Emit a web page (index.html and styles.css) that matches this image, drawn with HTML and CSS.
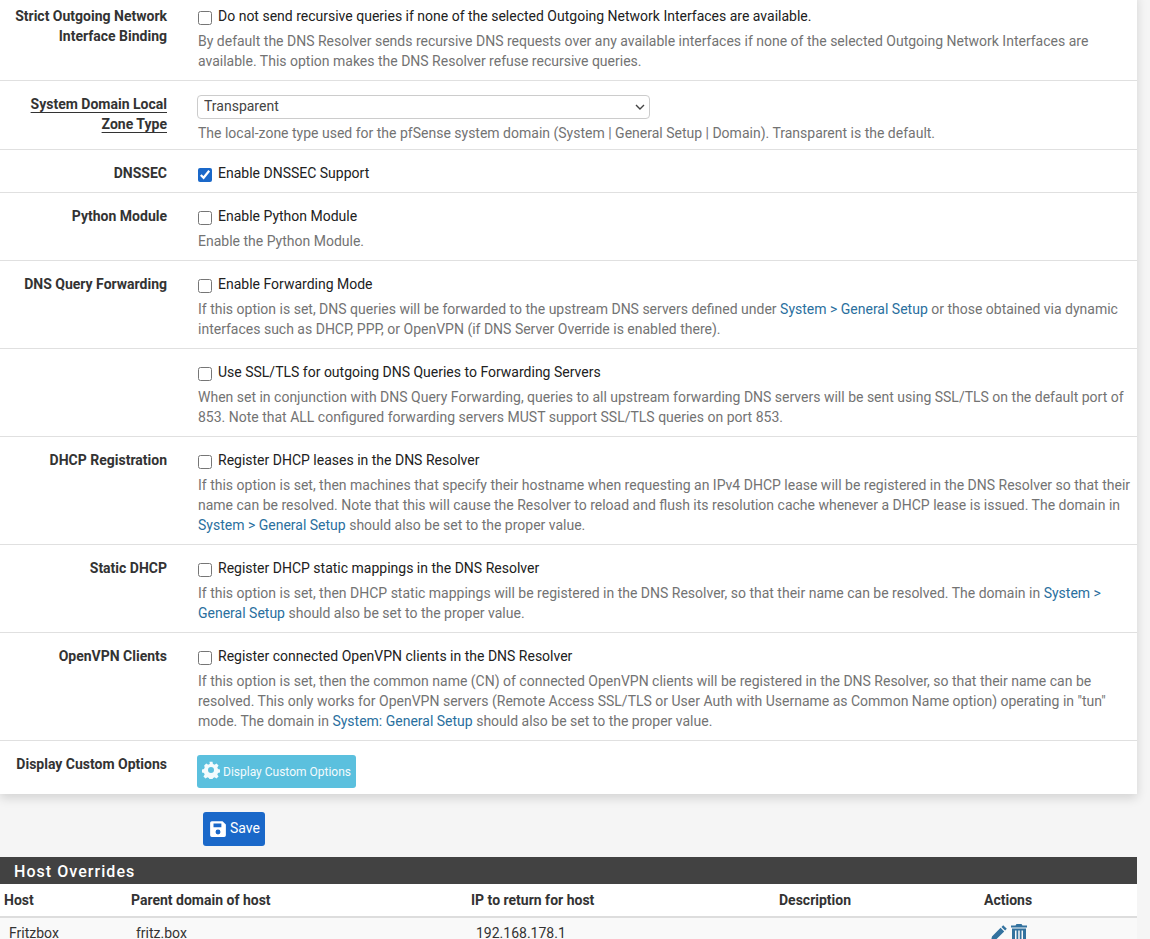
FILE: index.html
```html
<!DOCTYPE html>
<html lang="en">
<head>
<meta charset="utf-8">
<title>DNS Resolver</title>
<link rel="stylesheet" href="styles.css">
</head>
<body>
<main class="page">
<section class="panel">
  <div class="row">
    <div class="label">Strict Outgoing Network Interface Binding</div>
    <div class="field">
      <label class="check"><input type="checkbox">Do not send recursive queries if none of the selected Outgoing Network Interfaces are available.</label>
      <p class="help">By default the DNS Resolver sends recursive DNS requests over any available interfaces if none of the selected Outgoing Network Interfaces are available. This option makes the DNS Resolver refuse recursive queries.</p>
    </div>
  </div>
  <div class="row row-select">
    <div class="label"><span class="underlined">System Domain Local Zone Type</span></div>
    <div class="field">
      <div class="select-wrap">
        <select class="select"><option>Transparent</option></select>
        <svg class="select-arrow" viewBox="0 0 10 6" aria-hidden="true"><path fill="none" stroke="currentColor" stroke-width="1.400" d="M1 1l4 4 4-4"/></svg>
      </div>
      <p class="help help-select">The local-zone type used for the pfSense system domain (System | General Setup | Domain). Transparent is the default.</p>
    </div>
  </div>
  <div class="row">
    <div class="label">DNSSEC</div>
    <div class="field"><label class="check"><input type="checkbox" checked>Enable DNSSEC Support</label></div>
  </div>
  <div class="row">
    <div class="label">Python Module</div>
    <div class="field">
      <label class="check"><input type="checkbox">Enable Python Module</label>
      <p class="help">Enable the Python Module.</p>
    </div>
  </div>
  <div class="row">
    <div class="label">DNS Query Forwarding</div>
    <div class="field">
      <label class="check"><input type="checkbox">Enable Forwarding Mode</label>
      <p class="help">If this option is set, DNS queries will be forwarded to the upstream DNS servers defined under <a href="#">System &gt; General Setup</a> or those obtained via dynamic interfaces such as DHCP, PPP, or OpenVPN (if DNS Server Override is enabled there).</p>
    </div>
  </div>
  <div class="row">
    <div class="label"></div>
    <div class="field">
      <label class="check"><input type="checkbox">Use SSL/TLS for outgoing DNS Queries to Forwarding Servers</label>
      <p class="help">When set in conjunction with DNS Query Forwarding, queries to all upstream forwarding DNS servers will be sent using SSL/TLS on the default port of 853. Note that ALL configured forwarding servers MUST support SSL/TLS queries on port 853.</p>
    </div>
  </div>
  <div class="row">
    <div class="label">DHCP Registration</div>
    <div class="field">
      <label class="check"><input type="checkbox">Register DHCP leases in the DNS Resolver</label>
      <p class="help">If this option is set, then machines that specify their hostname when requesting an IPv4 DHCP lease will be registered in the DNS Resolver so that their name can be resolved. Note that this will cause the Resolver to reload and flush its resolution cache whenever a DHCP lease is issued. The domain in <a href="#">System &gt; General Setup</a> should also be set to the proper value.</p>
    </div>
  </div>
  <div class="row">
    <div class="label">Static DHCP</div>
    <div class="field">
      <label class="check"><input type="checkbox">Register DHCP static mappings in the DNS Resolver</label>
      <p class="help">If this option is set, then DHCP static mappings will be registered in the DNS Resolver, so that their name can be resolved. The domain in <a href="#">System &gt; General Setup</a> should also be set to the proper value.</p>
    </div>
  </div>
  <div class="row">
    <div class="label">OpenVPN Clients</div>
    <div class="field">
      <label class="check"><input type="checkbox">Register connected OpenVPN clients in the DNS Resolver</label>
      <p class="help">If this option is set, then the common name (CN) of connected OpenVPN clients will be registered in the DNS Resolver, so that their name can be resolved. This only works for OpenVPN servers (Remote Access SSL/TLS or User Auth with Username as Common Name option) operating in "tun" mode. The domain in <a href="#">System: General Setup</a> should also be set to the proper value.</p>
    </div>
  </div>
  <div class="row row-last">
    <div class="label">Display Custom Options</div>
    <div class="field">
      <button class="btn btn-info" type="button">
        <svg class="icon-gear" viewBox="0 0 24 24" aria-hidden="true"><path fill="currentColor" fill-rule="evenodd" d="M10 1h4l.6 3a8.400 8.400 0 0 1 2.100.9l2.600-1.700 2.800 2.800-1.700 2.600c.4.700.7 1.400.9 2.100l3 .6v4l-3 .6a8.400 8.400 0 0 1-.9 2.100l1.700 2.600-2.800 2.800-2.600-1.700a8.400 8.400 0 0 1-2.100.9l-.6 3h-4l-.6-3a8.400 8.400 0 0 1-2.100-.9l-2.600 1.700-2.800-2.800 1.700-2.600a8.400 8.400 0 0 1-.9-2.100l-3-.6v-4l3-.6c.2-.7.5-1.400.9-2.100L2.900 6l2.800-2.800 2.600 1.700c.7-.4 1.400-.7 2.100-.9zM12 8a4 4 0 1 0 0 8 4 4 0 0 0 0-8z"/></svg>
        <span>Display Custom Options</span>
      </button>
    </div>
  </div>
</section>

<div class="actions">
  <button class="btn btn-save" type="button">
    <svg class="icon-save" viewBox="0 0 16 16" aria-hidden="true"><path fill="currentColor" fill-rule="evenodd" d="M2 1h10l3 3v9.500A1.500 1.500 0 0 1 13.500 15h-11A1.500 1.500 0 0 1 1 13.500v-11A1.500 1.500 0 0 1 2.500 1zM4 3v3.500h7V3zm4 5.500a2.200 2.200 0 1 0 0 4.400 2.200 2.200 0 0 0 0-4.400z"/></svg>
    <span class="save-text">Save</span>
  </button>
</div>

<section class="hosts">
  <h2 class="hosts-title">Host Overrides</h2>
  <table class="hosts-table">
    <thead>
      <tr>
        <th class="c-host">Host</th>
        <th class="c-parent">Parent domain of host</th>
        <th class="c-ip">IP to return for host</th>
        <th class="c-desc">Description</th>
        <th class="c-actions">Actions</th>
      </tr>
    </thead>
    <tbody>
      <tr>
        <td>Fritzbox</td>
        <td>fritz.box</td>
        <td>192.168.178.1</td>
        <td></td>
        <td class="icons">
          <div class="icon-row">
            <svg class="icon-act" viewBox="0 0 18 18" aria-hidden="true"><path fill="currentColor" d="M13.200 1.200l3.600 3.600-1.700 1.700-3.600-3.600zM10.600 3.800l3.600 3.600-8.600 8.600L1 17l1-4.600z"/></svg>
            <svg class="icon-act" viewBox="0 0 18 18" aria-hidden="true"><path fill="currentColor" fill-rule="evenodd" d="M6.500 0h5l1 1.500H17V3.500H1V1.500h4.500zM2 4.500h14V18H2zM5 6.500v9.500h1.500V6.500zM8.250 6.500v9.500h1.500V6.500zM11.500 6.500v9.500H13V6.500z"/></svg>
          </div>
        </td>
      </tr>
    </tbody>
  </table>
</section>
</main>
</body>
</html>
```

FILE: styles.css
```css
* { box-sizing: border-box; }

html, body {
  height: 939px;
  margin: 0;
  overflow: hidden;
}

body {
  background: #f5f5f5;
  color: #212121;
  font-family: Roboto, "Liberation Sans", sans-serif;
  font-size: 14px;
  line-height: 20px;
}

.page {
  width: 1137px;
  margin-top: -7px;
}

.panel {
  background: #fff;
  box-shadow: 0 4px 10px rgba(0, 0, 0, 0.14);
}

.row {
  display: flex;
  padding: 13px 0 9px;
  border-bottom: 1px solid #e0e0e0;
}

.row-select { padding-bottom: 6px; }

.row-last {
  border-bottom: 0;
  padding-bottom: 6px;
}

.label {
  flex: 0 0 167px;
  padding-left: 10px;
  text-align: right;
  font-weight: 700;
  color: #333;
}

.underlined {
  text-decoration: underline;
  text-underline-offset: 3px;
}

.field {
  flex: 1;
  margin-left: 31px;
  padding-right: 5px;
}

.check {
  display: flex;
  align-items: center;
  color: #212121;
}

.check input {
  width: 14px;
  height: 14px;
  margin: 4px 6px 0 0;
  accent-color: #1a68c9;
}

.help {
  margin: 5px 0 0;
  color: #737373;
}

.help-select { margin-top: 4px; }

.help a {
  color: #2a6f9e;
  text-decoration: none;
}

.select-wrap {
  position: relative;
  width: 453px;
  margin: 1px 0 0 -1px;
}

.select {
  display: block;
  width: 100%;
  height: 24px;
  padding: 0 6px 2px;
  appearance: none;
  font: 14px/20px Roboto, "Liberation Sans", sans-serif;
  color: #444;
  background: #fff;
  border: 1px solid #ccc;
  border-radius: 4px;
}

.select-arrow {
  position: absolute;
  top: 9px;
  right: 5px;
  width: 10px;
  height: 6px;
  color: #444;
  pointer-events: none;
}

.btn {
  display: inline-flex;
  align-items: center;
  border-radius: 3px;
  border: 1px solid transparent;
  color: #fff;
  font-family: Roboto, "Liberation Sans", sans-serif;
}

.btn-info {
  width: 159px;
  height: 33px;
  margin: 1px 0 0 -1px;
  padding: 0 0 0 4px;
  background: #5bc0de;
  font-size: 12px;
  color: #f3fbfd;
}

.icon-gear {
  width: 18px;
  height: 18px;
  margin: -3px 3px 0 0;
}

.actions {
  height: 63px;
  padding: 18px 0 0 203px;
}

.btn-save {
  width: 62px;
  height: 34px;
  padding: 0 0 0 5px;
  background: #1a68c9;
  font-size: 14px;
}

.icon-save {
  width: 18px;
  height: 18px;
  margin-right: 3px;
}

.save-text { margin-top: -2px; }

.hosts {
  background: #fff;
}

.hosts-title {
  height: 27px;
  margin: 0;
  padding-left: 14px;
  background: #424242;
  color: #fff;
  font-size: 16px;
  line-height: 29px;
  font-weight: 500;
  letter-spacing: 1.05px;
}

.hosts-table {
  width: 100%;
  border-collapse: collapse;
  table-layout: fixed;
}

.hosts-table th {
  height: 33px;
  padding: 0 0 0 4px;
  text-align: left;
  font-weight: 700;
  color: #333;
  border-bottom: 2px solid #ddd;
}

.hosts-table td {
  padding: 5px 0 0 9px;
  background: #f9f9f9;
  color: #333;
  vertical-align: top;
}

.c-host { width: 127px; }
.c-parent { width: 340px; }
.c-ip { width: 308px; }
.c-desc { width: 205px; }

.hosts-table .icons {
  padding: 6px 0 0 10px;
  color: #33729f;
}

.icon-row {
  display: flex;
  gap: 2px;
}

.icon-act {
  width: 18px;
  height: 18px;
}
```
